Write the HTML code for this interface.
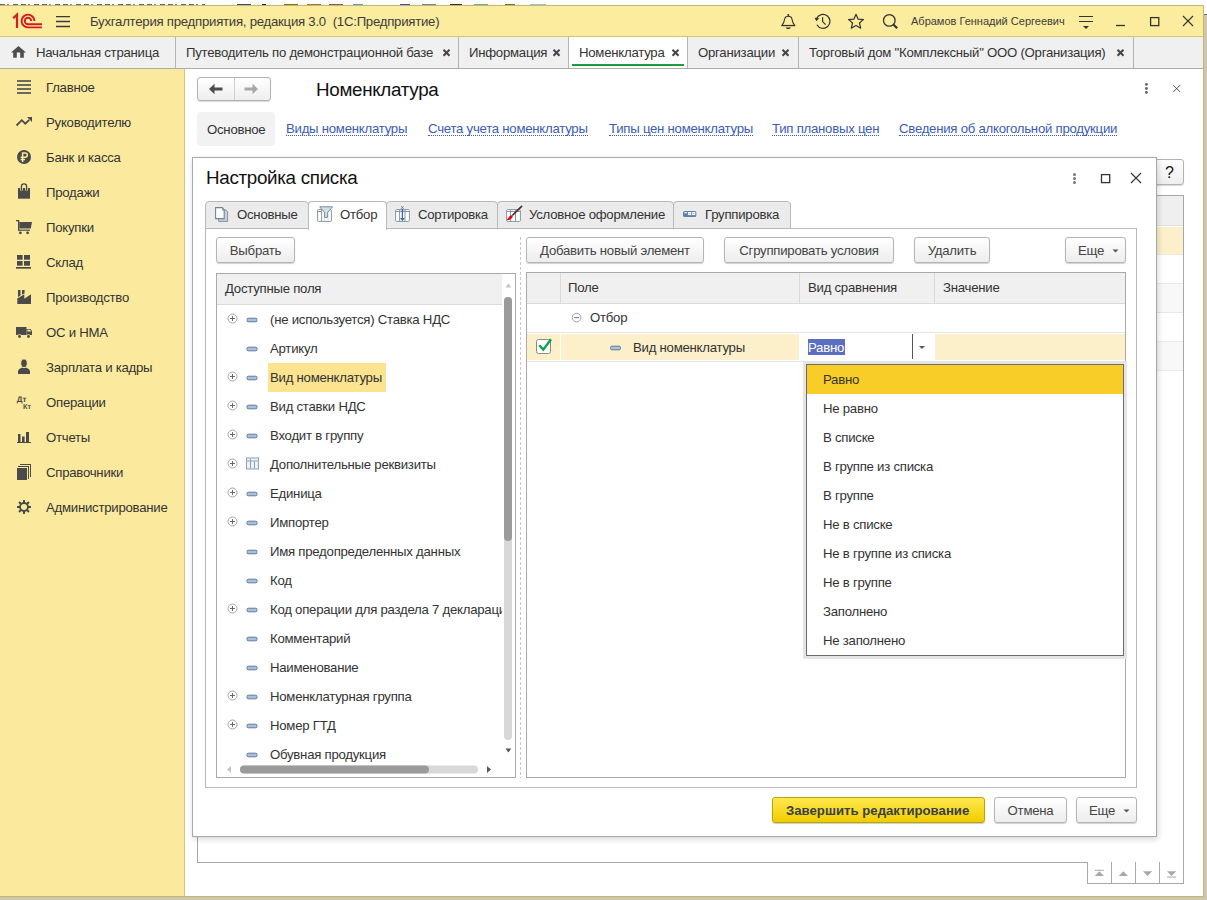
<!DOCTYPE html>
<html><head><meta charset="utf-8">
<style>
*{box-sizing:border-box;margin:0;padding:0}
html,body{width:1207px;height:900px;overflow:hidden}
body{position:relative;background:#CCC6B2;font-family:"Liberation Sans",sans-serif;font-size:13.2px;letter-spacing:-0.25px;color:#333}
.a{position:absolute}
.t{position:absolute;white-space:pre;line-height:17px;height:17px}
svg{position:absolute;overflow:visible}
.btn{position:absolute;border:1px solid #B4B4B4;border-radius:3px;background:linear-gradient(#FFFFFF,#EDEDED);box-shadow:0 1px 1px rgba(0,0,0,.18);color:#444;text-align:center;line-height:25px;white-space:pre}
.sep{position:absolute;top:37px;width:1px;height:31px;background:#B5B5B5}
.link{color:#3B5BB5;border-bottom:1px dotted #3B5BB5;height:16px!important}
</style></head>
<body>
<!-- top strip -->
<div class="a" style="left:0;top:0;width:1207px;height:5px;background:#fff"></div>
<div class="a" style="left:1204px;top:0;width:3px;height:14px;background:#fff"></div>
<div class="a" style="left:1204px;top:14px;width:3px;height:1px;background:#6A6E78"></div>
<div class="a" style="left:0;top:4px;width:205px;height:1px;background:repeating-linear-gradient(90deg,#6A6A6A 0 5px,transparent 5px 7px,#888 7px 9px,transparent 9px 13px,#666 13px 18px,transparent 18px 21px)"></div>
<div class="a" style="left:237px;top:4px;width:14px;height:1px;background:#2A4F8F"></div>
<div class="a" style="left:262px;top:4px;width:4px;height:1px;background:#222"></div>
<div class="a" style="left:284px;top:4px;width:14px;height:1px;background:#8A6A20"></div>
<div class="a" style="left:307px;top:4px;width:14px;height:1px;background:#A07A30"></div>
<div class="a" style="left:329px;top:4px;width:14px;height:1px;background:#9A5050"></div>
<div class="a" style="left:353px;top:4px;width:10px;height:1px;background:#5A9AD0"></div>
<div class="a" style="left:400px;top:4px;width:10px;height:1px;background:#3050B0"></div>
<div class="a" style="left:422px;top:4px;width:14px;height:1px;background:#7080A0"></div>
<div class="a" style="left:450px;top:4px;width:12px;height:1px;background:#442222"></div>
<div class="a" style="left:474px;top:4px;width:14px;height:1px;background:#70B070"></div>
<div class="a" style="left:505px;top:4px;width:10px;height:1px;background:#8A6A20"></div>
<div class="a" style="left:530px;top:4px;width:16px;height:1px;background:#9AC0E0"></div>
<!-- window frame -->
<div class="a" style="left:0;top:5px;width:1204px;height:892px;border:1px solid #C8B86C;border-left:none;background:#fff"></div>
<!-- title bar -->
<div class="a" style="left:0;top:6px;width:1203px;height:31px;background:#FBEC9E;border-bottom:1px solid #D5C37A"></div>
<!-- tab bar -->
<div class="a" style="left:0;top:37px;width:1203px;height:32px;background:#F0F0F0;border-bottom:1px solid #ABABAB"></div>
<!-- sidebar -->
<div class="a" style="left:0;top:69px;width:185px;height:827px;background:#FBEA9D;border-right:1px solid #D6C67E"></div>

<!-- ===== title bar content ===== -->
<svg style="left:0;top:0" width="1207" height="40">
  <!-- 1C logo -->
  <g fill="none" stroke="#D71920">
    <path d="M13.2 18.3 L17 14.6 V28" stroke-width="2.2"/>
    <path d="M42 27.4 H28 A6.4 6.4 0 1 1 34.4 21" stroke-width="1.9"/>
    <path d="M42 24.2 H28 A3.2 3.2 0 1 1 31.2 21" stroke-width="1.9"/>
  </g>
  <!-- hamburger -->
  <g stroke="#3A3A3A" stroke-width="1.3">
    <path d="M56 16.6H70M56 21.5H70M56 26.5H70"/>
  </g>
</svg>
<div class="t" style="left:90px;top:13px;color:#3C3C3C;letter-spacing:-0.25px">Бухгалтерия предприятия, редакция 3.0  (1С:Предприятие)</div>

<svg style="left:0;top:0" width="1207" height="40">
  <!-- bell -->
  <path d="M782 25.3 C784 23 784.4 21 784.8 18.5 C785.1 16.9 786.1 16.2 788.3 16.2 C790.5 16.2 791.5 16.9 791.8 18.5 C792.2 21 792.6 23 794.6 25.3" fill="none" stroke="#333" stroke-width="1.1"/>
  <rect x="781.3" y="24.9" width="14" height="1.3" fill="#333"/>
  <circle cx="788.3" cy="15.1" r="1" fill="#333"/>
  <path d="M785.6 27.4 H791 C790.4 28.6 789.4 29.1 788.3 29.1 C787.2 29.1 786.2 28.6 785.6 27.4Z" fill="#333"/>
  <!-- history clock -->
  <path d="M816.6 18.45 A7 7 0 1 1 816.9 24.8" fill="none" stroke="#333" stroke-width="1.2"/>
  <path d="M814.6 17.8 L819.2 18.3 L816.3 21.3Z" fill="#333"/>
  <path d="M822.6 17.2 V21.6 L825.6 24.6" fill="none" stroke="#333" stroke-width="1.2"/>
  <!-- star -->
  <path d="M856 14.3 L858.2 19.2 L863.4 19.6 L859.4 23 L860.7 28.2 L856 25.4 L851.3 28.2 L852.6 23 L848.6 19.6 L853.8 19.2Z" fill="none" stroke="#333" stroke-width="1.2" stroke-linejoin="round"/>
  <!-- search -->
  <circle cx="889.3" cy="20.4" r="5.8" fill="none" stroke="#333" stroke-width="1.3"/>
  <path d="M893.6 24.8 L897.2 28.3" stroke="#333" stroke-width="2.2"/>
  <!-- filter lines -->
  <g stroke="#333" stroke-width="1.2"><path d="M1079 16.5H1093M1079 21.5H1093"/></g>
  <path d="M1083 26 H1089 L1086 29Z" fill="#333"/>
  <!-- minimize -->
  <path d="M1116 25.5H1125" stroke="#333" stroke-width="1.3"/>
  <!-- maximize -->
  <rect x="1150.6" y="17.6" width="8.2" height="8" fill="none" stroke="#333" stroke-width="1.3"/>
  <!-- close -->
  <path d="M1183 16L1193 26M1193 16L1183 26" stroke="#333" stroke-width="1.1"/>
</svg>
<div class="t" style="left:911px;top:13px;font-size:11px;letter-spacing:0;color:#3C3C3C">Абрамов Геннадий Сергеевич</div>

<!-- ===== tab bar ===== -->
<svg style="left:0;top:0" width="40" height="70">
  <path d="M11 52.6 L18.5 46 L26 52.6 H23.8 V57.8 H20.2 V52.6 H16.8 V57.8 H13.2 V52.6Z" fill="#4D4D4D"/>
</svg>
<div class="t" style="left:36px;top:44px">Начальная страница</div>
<div class="sep" style="left:175px"></div>
<div class="t" style="left:186px;top:44px">Путеводитель по демонстрационной базе</div>
<div class="sep" style="left:458px"></div>
<div class="t" style="left:469px;top:44px">Информация</div>
<div class="sep" style="left:568px"></div>
<div class="a" style="left:569px;top:37px;width:118px;height:31px;background:#fff"></div>
<div class="a" style="left:572px;top:64px;width:112px;height:2px;background:#1F9C3F"></div>
<div class="t" style="left:579px;top:44px">Номенклатура</div>
<div class="sep" style="left:687px"></div>
<div class="t" style="left:698px;top:44px">Организации</div>
<div class="sep" style="left:798px"></div>
<div class="t" style="left:809px;top:44px">Торговый дом "Комплексный" ООО (Организация)</div>
<div class="sep" style="left:1133px"></div>
<svg style="left:0;top:0" width="1207" height="70">
  <g stroke="#444" stroke-width="2">
    <path d="M443.5 49.7l6 6M449.5 49.7l-6 6"/>
    <path d="M553.5 49.7l6 6M559.5 49.7l-6 6"/>
    <path d="M672.5 49.7l6 6M678.5 49.7l-6 6"/>
    <path d="M782.5 49.7l6 6M788.5 49.7l-6 6"/>
    <path d="M1117.5 49.7l6 6M1123.5 49.7l-6 6"/>
  </g>
</svg>

<!-- ===== sidebar ===== -->
<div class="t" style="left:46px;top:79.0px;">Главное</div>
<div class="t" style="left:46px;top:114.0px;">Руководителю</div>
<div class="t" style="left:46px;top:149.0px;">Банк и касса</div>
<div class="t" style="left:46px;top:184.0px;">Продажи</div>
<div class="t" style="left:46px;top:219.0px;">Покупки</div>
<div class="t" style="left:46px;top:254.0px;">Склад</div>
<div class="t" style="left:46px;top:289.0px;">Производство</div>
<div class="t" style="left:46px;top:324.0px;">ОС и НМА</div>
<div class="t" style="left:46px;top:359.0px;">Зарплата и кадры</div>
<div class="t" style="left:46px;top:394.0px;">Операции</div>
<div class="t" style="left:46px;top:429.0px;">Отчеты</div>
<div class="t" style="left:46px;top:464.0px;">Справочники</div>
<div class="t" style="left:46px;top:499.0px;">Администрирование</div>
<svg style="left:0;top:0" width="185" height="520">
 <g fill="#4A4A4A">
  <!-- main -->
  <rect x="17" y="80.2" width="14" height="1.6"/><rect x="17" y="84.2" width="14" height="1.6"/><rect x="17" y="88.2" width="14" height="1.6"/><rect x="17" y="92.2" width="14" height="1.6"/>
  <!-- trend -->
  <path d="M16.5 125.5 L21.8 120.2 L25.3 123.7 L29.2 119.8" fill="none" stroke="#4A4A4A" stroke-width="1.8"/>
  <path d="M27 117 H32 V122 Z"/>
  <!-- ruble -->
  <circle cx="24" cy="157" r="7"/>
  <path d="M22.6 162 V153 H25.2 A2.1 2.1 0 0 1 25.2 157.2 H20.6 M20.6 159.4 H25" fill="none" stroke="#FBEA9D" stroke-width="1.5"/>
  <!-- bag -->
  <rect x="18" y="188" width="12" height="10.7"/>
  <path d="M21.4 190.5 V186.5 A2.6 2.6 0 0 1 26.6 186.5 V190.5" fill="none" stroke="#FBEA9D" stroke-width="2.8"/>
  <path d="M21.4 190.5 V186.5 A2.6 2.6 0 0 1 26.6 186.5 V190.5" fill="none" stroke="#4A4A4A" stroke-width="1.3"/>
  <!-- cart -->
  <path d="M19.3 222 H32 L30.8 228.6 H19.3Z"/>
  <rect x="16" y="220" width="2.8" height="1.3"/>
  <rect x="18" y="220" width="1.3" height="10.8"/>
  <rect x="18" y="229.6" width="12" height="1.2"/>
  <circle cx="20.4" cy="232.8" r="1.4"/><circle cx="27.6" cy="232.8" r="1.4"/>
  <!-- warehouse -->
  <rect x="17" y="255" width="5.6" height="4.7"/><rect x="24" y="255" width="6" height="4.7"/>
  <rect x="17" y="261" width="5.6" height="4.7"/><rect x="24" y="261" width="6" height="4.7"/>
  <rect x="16" y="267" width="15" height="1.7"/>
  <!-- factory -->
  <path d="M17.3 298.6 L24.3 294.3 V298.8 L31 294.3 V304 H17.3Z"/>
  <path d="M18 290 H20.5 V295.6 L18 297.1Z"/><path d="M22 290 H24.6 V293.2 L22 294.7Z"/>
  <!-- truck -->
  <rect x="16" y="327" width="10.5" height="8"/>
  <path d="M26.5 329 H30.5 L32 331 V335 H26.5Z"/>
  <path d="M27.3 329.8 H30 L31.2 331.5 H27.3Z" fill="#FBEA9D"/>
  <circle cx="19.5" cy="336.5" r="2.3" fill="#FBEA9D"/><circle cx="28.5" cy="336.5" r="2.3" fill="#FBEA9D"/>
  <circle cx="19.5" cy="336.5" r="1.4"/><circle cx="28.5" cy="336.5" r="1.4"/>
  <!-- person -->
  <path d="M18 374 V371.8 C18 369.2 20.8 367.6 24 367.6 C27.2 367.6 30 369.2 30 371.8 V374Z"/>
  <ellipse cx="24" cy="363.2" rx="3.3" ry="4.3" stroke="#FBEA9D" stroke-width="1"/>
  <!-- Dt Kt -->
  <g style="letter-spacing:0">
  <text x="16.8" y="401.5" font-family="Liberation Sans" font-weight="bold" font-size="8" text-rendering="geometricPrecision">Дт</text>
  <text x="23" y="408.6" font-family="Liberation Sans" font-weight="bold" font-size="7.2" text-rendering="geometricPrecision">Кт</text>
  </g>
  <!-- reports -->
  <rect x="18" y="434" width="2.5" height="8.2"/><rect x="22" y="436.5" width="2.6" height="5.7"/><rect x="26" y="432" width="3" height="10.2"/>
  <rect x="17" y="442" width="14" height="1"/>
  <!-- directories -->
  <rect x="17" y="468" width="10" height="12"/>
  <rect x="18" y="466" width="11" height="1"/><rect x="28" y="466" width="1" height="13"/>
  <rect x="20" y="464" width="11" height="1"/><rect x="30" y="464" width="1" height="13"/>
  <!-- gear -->
  <g transform="translate(24 507)">
   <g stroke="#4A4A4A" stroke-width="2">
    <path d="M0 -7V7M-7 0H7M-4.95 -4.95L4.95 4.95M4.95 -4.95L-4.95 4.95"/>
   </g>
   <circle r="4.9"/>
   <circle r="3.1" fill="#FBEA9D"/>
  </g>
 </g>
</svg>

<!-- ===== behind form ===== -->
<div class="a" style="left:197px;top:77px;width:74px;height:24px;border:1px solid #B2B2B2;border-radius:3px;background:linear-gradient(#FFFFFF,#EEEEEE);box-shadow:0 1px 1px rgba(0,0,0,.15)"></div>
<div class="a" style="left:234px;top:78px;width:1px;height:22px;background:#CFCFCF"></div>
<svg style="left:0;top:0" width="300" height="110">
  <path d="M209 89 L214.5 83.8 V87.6 H222.5 V90.4 H214.5 V94.2Z" fill="#4D4D4D"/>
  <path d="M258 89 L252.5 83.8 V87.6 H244.5 V90.4 H252.5 V94.2Z" fill="#A8A8A8"/>
</svg>
<div class="t" style="left:316px;top:78px;height:24px;line-height:24px;font-size:18.8px;letter-spacing:-0.3px;color:#111">Номенклатура</div>
<svg style="left:0;top:0" width="1207" height="110">
  <circle cx="1146.4" cy="84.4" r="1.45" fill="#6A6A6A"/><circle cx="1146.4" cy="88.5" r="1.45" fill="#6A6A6A"/><circle cx="1146.4" cy="92.5" r="1.45" fill="#6A6A6A"/>
  <path d="M1173.2 85.1 L1180.2 92.1 M1180.2 85.1 L1173.2 92.1" stroke="#444" stroke-width="0.9"/>
</svg>
<div class="a" style="left:197px;top:112px;width:78px;height:34px;background:#F2F2F2;border-radius:4px"></div>
<div class="t" style="left:207px;top:121px">Основное</div>
<div class="t link" style="left:286px;top:120px">Виды номенклатуры</div>
<div class="t link" style="left:428px;top:120px">Счета учета номенклатуры</div>
<div class="t link" style="left:609px;top:120px">Типы цен номенклатуры</div>
<div class="t link" style="left:772px;top:120px">Тип плановых цен</div>
<div class="t link" style="left:899px;top:120px">Сведения об алкогольной продукции</div>

<!-- help button -->
<div class="a" style="left:1150px;top:159px;width:34px;height:26px;border:1px solid #B2B2B2;border-radius:3px;background:linear-gradient(#FFFFFF,#EEEEEE);box-shadow:0 1px 1px rgba(0,0,0,.15)"></div>
<div class="t" style="left:1165px;top:164px;font-size:16px;letter-spacing:0;color:#111">?</div>
<!-- behind table -->
<div class="a" style="left:197px;top:195px;width:987px;height:668px;border:1px solid #A8A8A8;background:#fff"></div>
<div class="a" style="left:198px;top:196px;width:985px;height:30px;background:#EFEFEF;border-bottom:1px solid #E0E0E0"></div>
<div class="a" style="left:198px;top:227px;width:985px;height:28px;background:#FCF0CA;border-bottom:1px solid #E8E8E8"></div>
<div class="a" style="left:198px;top:255px;width:985px;height:29px;background:#FFFFFF;border-bottom:1px solid #E8E8E8"></div>
<div class="a" style="left:198px;top:284px;width:985px;height:29px;background:#F8F8F8;border-bottom:1px solid #E8E8E8"></div>
<div class="a" style="left:198px;top:313px;width:985px;height:29px;background:#FFFFFF;border-bottom:1px solid #E8E8E8"></div>
<div class="a" style="left:198px;top:342px;width:985px;height:29px;background:#F8F8F8;border-bottom:1px solid #E8E8E8"></div>
<!-- behind nav buttons -->
<div class="a" style="left:1087px;top:862px;width:97px;height:22px;border:1px solid #A8A8A8;border-top:none;background:#fff"></div>
<div class="a" style="left:1111px;top:862px;width:1px;height:21px;background:#A8A8A8"></div>
<div class="a" style="left:1135px;top:862px;width:1px;height:21px;background:#A8A8A8"></div>
<div class="a" style="left:1159px;top:862px;width:1px;height:21px;background:#A8A8A8"></div>
<svg style="left:0;top:0" width="1207" height="900">
  <g fill="#A8A8A8">
    <rect x="1094.8" y="869.8" width="9.2" height="1"/><path d="M1094.8 876 L1099.4 871.3 L1104 876Z"/>
    <path d="M1118.8 876 L1123.4 871.3 L1128 876Z"/>
    <path d="M1143 871.3 L1147.6 876 L1152.2 871.3Z"/>
    <path d="M1167 871.3 L1171.6 876 L1176.2 871.3Z"/><rect x="1167" y="876.6" width="9.2" height="1"/>
  </g>
</svg>

<!-- ===== dialog ===== -->
<div class="a" style="left:192px;top:157px;width:965px;height:680px;border:1px solid #A8A8A8;background:#fff;box-shadow:1px 2px 6px rgba(0,0,0,.17)"></div>
<div class="t" style="left:206px;top:166px;height:24px;line-height:24px;font-size:18.8px;letter-spacing:-0.3px;color:#111">Настройка списка</div>
<svg style="left:0;top:0" width="1207" height="200">
  <circle cx="1074.5" cy="174.5" r="1.5" fill="#777"/><circle cx="1074.5" cy="178.5" r="1.5" fill="#777"/><circle cx="1074.5" cy="182.5" r="1.5" fill="#777"/>
  <rect x="1101.5" y="174.6" width="8.2" height="8" fill="none" stroke="#333" stroke-width="1.3"/>
  <path d="M1131 173 L1141 183 M1141 173 L1131 183" stroke="#333" stroke-width="1.1"/>
</svg>
<!-- tab page frame -->
<div class="a" style="left:205px;top:228px;width:932px;height:560px;border:1px solid #B9B9B9;background:#fff"></div>
<!-- tabs -->
<div class="a" style="left:205px;top:201px;width:104px;height:28px;border:1px solid #B9B9B9;border-radius:4px 4px 0 0;background:#EBEBEB"></div>
<div class="a" style="left:386px;top:201px;width:112px;height:28px;border:1px solid #B9B9B9;border-radius:4px 4px 0 0;background:#EBEBEB"></div>
<div class="a" style="left:497px;top:201px;width:177px;height:28px;border:1px solid #B9B9B9;border-radius:4px 4px 0 0;background:#EBEBEB"></div>
<div class="a" style="left:673px;top:201px;width:118px;height:28px;border:1px solid #B9B9B9;border-radius:4px 4px 0 0;background:#EBEBEB"></div>
<div class="a" style="left:308px;top:201px;width:79px;height:29px;border:1px solid #B9B9B9;border-bottom:none;border-radius:4px 4px 0 0;background:#fff"></div>
<div class="t" style="left:237px;top:206px">Основные</div>
<div class="t" style="left:340px;top:206px">Отбор</div>
<div class="t" style="left:418px;top:206px">Сортировка</div>
<div class="t" style="left:529px;top:206px">Условное оформление</div>
<div class="t" style="left:705px;top:206px">Группировка</div>
<svg style="left:0;top:0" width="1207" height="240">
  <!-- tab1 icon: pages -->
  <path d="M218.6 210 H226 L227.6 211.8 V221.4 H218.6Z" fill="#C9D1DA" stroke="#7F93A6" stroke-width="1"/>
  <path d="M215.6 207.6 H222.4 L224.2 209.6 V218.6 H215.6Z" fill="#fff" stroke="#6F849A" stroke-width="1.1"/>
  <path d="M222.2 207.8 V210.4 H224.2Z" fill="#6F849A"/>
  <!-- tab2 icon: funnel over table -->
  <rect x="317.6" y="209.6" width="13.8" height="11.8" rx="1" fill="#fff" stroke="#8797A5" stroke-width="1"/>
  <path d="M317.6 211.5 H321.6 M321.6 209.6 V221.4" stroke="#8797A5" stroke-width="1"/>
  <path d="M324.5 212 V221M328 212 V221" stroke="#D5DBE1" stroke-width="1"/>
  <path d="M319.6 206.8 H332.6 L327.6 212.4 V217.4 H324.6 V212.4Z" fill="#D5DCE3" stroke="#7D8D9B" stroke-width="1"/>
  <!-- tab3 icon: sort -->
  <rect x="395.6" y="209.6" width="13.8" height="11.8" rx="1" fill="#fff" stroke="#8797A5" stroke-width="1"/>
  <path d="M395.6 211.5 H409.4 M399.6 209.6 V221.4 M405 209.6 V221.4" stroke="#8797A5" stroke-width="1"/>
  <path d="M402.4 210 V218.5" stroke="#3A68A8" stroke-width="1.3"/>
  <path d="M400 218 H404.8 L402.4 221.2Z" fill="#3A68A8"/>
  <path d="M401.4 206.3 L403.4 208.3 M403.4 206.3 L401.4 208.3 M401.4 208.3 L403.4 210.3 M403.4 208.3 L401.4 210.3" stroke="#3A68A8" stroke-width=".8"/>
  <!-- tab4 icon: brush -->
  <rect x="506.6" y="209.6" width="13.8" height="11.8" rx="1" fill="#fff" stroke="#8797A5" stroke-width="1"/>
  <path d="M506.6 211.5 H520.4 M510.6 209.6 V221.4 M515.5 209.6 V221.4" stroke="#8797A5" stroke-width="1"/>
  <path d="M521.6 206.4 L512.8 215" stroke="#4A2A10" stroke-width="1.6" stroke-linecap="round"/>
  <path d="M511.8 215.2 C510 215.2 508.6 217.5 506.6 220.2 C509.5 220.4 511.5 219 512.6 217 C513 216.3 512.8 215.6 511.8 215.2Z" fill="#E80000"/>
  <!-- tab5 icon: grouping -->
  <rect x="683" y="211" width="13.3" height="6" rx="1.5" fill="#5E82A8"/>
  <rect x="684.3" y="212.2" width="2.8" height="1" fill="#fff"/>
  <rect x="688.1" y="212" width="3.1" height="3.1" fill="#fff"/><rect x="692.2" y="212" width="3.1" height="3.1" fill="#fff"/>
  <circle cx="689.6" cy="213.5" r=".5" fill="#888"/><circle cx="693.7" cy="213.5" r=".5" fill="#888"/>
</svg>

<!-- buttons -->
<div class="btn" style="left:216px;top:237px;width:79px;height:26px">Выбрать</div>
<div class="btn" style="left:526px;top:237px;width:178px;height:26px">Добавить новый элемент</div>
<div class="btn" style="left:724px;top:237px;width:170px;height:26px">Сгруппировать условия</div>
<div class="btn" style="left:914px;top:237px;width:76px;height:26px">Удалить</div>
<div class="btn" style="left:1065px;top:237px;width:61px;height:26px;text-align:left;padding-left:12px">Еще</div>
<svg style="left:0;top:0" width="1207" height="270"><path d="M1112.5 249.5 H1118.5 L1115.5 252.5Z" fill="#555"/></svg>
<!-- splitter -->
<div class="a" style="left:520px;top:237px;width:1px;height:541px;background:repeating-linear-gradient(#C8C8C8 0 3px,transparent 3px 5px)"></div>

<!-- ===== left table ===== -->
<div class="a" style="left:216px;top:273px;width:300px;height:505px;border:1px solid #A9A9A9;background:#fff;overflow:hidden">
  <div class="a" style="left:0;top:0;width:285px;height:31px;background:#F0F0F0;border-bottom:1px solid #DADADA"></div>
  <div class="t" style="left:8px;top:6px">Доступные поля</div>
  <div class="a" style="left:51px;top:89px;width:118px;height:29px;background:#FBE38F"></div>
  <div class="a" style="left:0;top:31px;width:285px;height:460px;overflow:hidden"><div class="a" style="left:0;top:-31px;width:300px;height:505px">
<div class="t" style="left:53px;top:37.0px">(не используется) Ставка НДС</div>
  <div class="t" style="left:53px;top:66.0px">Артикул</div>
  <div class="t" style="left:53px;top:95.0px">Вид номенклатуры</div>
  <div class="t" style="left:53px;top:124.0px">Вид ставки НДС</div>
  <div class="t" style="left:53px;top:153.0px">Входит в группу</div>
  <div class="t" style="left:53px;top:182.0px">Дополнительные реквизиты</div>
  <div class="t" style="left:53px;top:211.0px">Единица</div>
  <div class="t" style="left:53px;top:240.0px">Импортер</div>
  <div class="t" style="left:53px;top:269.0px">Имя предопределенных данных</div>
  <div class="t" style="left:53px;top:298.0px">Код</div>
  <div class="t" style="left:53px;top:327.0px">Код операции для раздела 7 декларации</div>
  <div class="t" style="left:53px;top:356.0px">Комментарий</div>
  <div class="t" style="left:53px;top:385.0px">Наименование</div>
  <div class="t" style="left:53px;top:414.0px">Номенклатурная группа</div>
  <div class="t" style="left:53px;top:443.0px">Номер ГТД</div>
  <div class="t" style="left:53px;top:472.0px">Обувная продукция</div>
</div></div>
<svg style="left:-1px;top:-1px" width="300" height="505">
  <circle cx="16.5" cy="45.5" r="4.5" fill="#fff" stroke="#A5A5A5" stroke-width="1"/><path d="M14 45.5H19M16.5 43.0V48.0" stroke="#6A6A6A" stroke-width="1"/>
  <rect x="31" y="45.2" width="10" height="3.6" rx="1.3" fill="#A9C0D6" stroke="#5B7C9E" stroke-width="1"/>
  <rect x="31" y="74.2" width="10" height="3.6" rx="1.3" fill="#A9C0D6" stroke="#5B7C9E" stroke-width="1"/>
  <circle cx="16.5" cy="103.5" r="4.5" fill="#fff" stroke="#A5A5A5" stroke-width="1"/><path d="M14 103.5H19M16.5 101.0V106.0" stroke="#6A6A6A" stroke-width="1"/>
  <rect x="31" y="103.2" width="10" height="3.6" rx="1.3" fill="#A9C0D6" stroke="#5B7C9E" stroke-width="1"/>
  <circle cx="16.5" cy="132.5" r="4.5" fill="#fff" stroke="#A5A5A5" stroke-width="1"/><path d="M14 132.5H19M16.5 130.0V135.0" stroke="#6A6A6A" stroke-width="1"/>
  <rect x="31" y="132.2" width="10" height="3.6" rx="1.3" fill="#A9C0D6" stroke="#5B7C9E" stroke-width="1"/>
  <circle cx="16.5" cy="161.5" r="4.5" fill="#fff" stroke="#A5A5A5" stroke-width="1"/><path d="M14 161.5H19M16.5 159.0V164.0" stroke="#6A6A6A" stroke-width="1"/>
  <rect x="31" y="161.2" width="10" height="3.6" rx="1.3" fill="#A9C0D6" stroke="#5B7C9E" stroke-width="1"/>
  <circle cx="16.5" cy="190.5" r="4.5" fill="#fff" stroke="#A5A5A5" stroke-width="1"/><path d="M14 190.5H19M16.5 188.0V193.0" stroke="#6A6A6A" stroke-width="1"/>
  <rect x="30.5" y="185.0" width="12" height="11" fill="#EEF2F6" stroke="#8DA2B8" stroke-width="1"/><path d="M30.5 188.0H42.5M34.5 185.5V195.5M38.5 188.5V195.5" stroke="#8DA2B8" stroke-width="1"/>
  <circle cx="16.5" cy="219.5" r="4.5" fill="#fff" stroke="#A5A5A5" stroke-width="1"/><path d="M14 219.5H19M16.5 217.0V222.0" stroke="#6A6A6A" stroke-width="1"/>
  <rect x="31" y="219.2" width="10" height="3.6" rx="1.3" fill="#A9C0D6" stroke="#5B7C9E" stroke-width="1"/>
  <circle cx="16.5" cy="248.5" r="4.5" fill="#fff" stroke="#A5A5A5" stroke-width="1"/><path d="M14 248.5H19M16.5 246.0V251.0" stroke="#6A6A6A" stroke-width="1"/>
  <rect x="31" y="248.2" width="10" height="3.6" rx="1.3" fill="#A9C0D6" stroke="#5B7C9E" stroke-width="1"/>
  <rect x="31" y="277.2" width="10" height="3.6" rx="1.3" fill="#A9C0D6" stroke="#5B7C9E" stroke-width="1"/>
  <rect x="31" y="306.2" width="10" height="3.6" rx="1.3" fill="#A9C0D6" stroke="#5B7C9E" stroke-width="1"/>
  <circle cx="16.5" cy="335.5" r="4.5" fill="#fff" stroke="#A5A5A5" stroke-width="1"/><path d="M14 335.5H19M16.5 333.0V338.0" stroke="#6A6A6A" stroke-width="1"/>
  <rect x="31" y="335.2" width="10" height="3.6" rx="1.3" fill="#A9C0D6" stroke="#5B7C9E" stroke-width="1"/>
  <rect x="31" y="364.2" width="10" height="3.6" rx="1.3" fill="#A9C0D6" stroke="#5B7C9E" stroke-width="1"/>
  <rect x="31" y="393.2" width="10" height="3.6" rx="1.3" fill="#A9C0D6" stroke="#5B7C9E" stroke-width="1"/>
  <circle cx="16.5" cy="422.5" r="4.5" fill="#fff" stroke="#A5A5A5" stroke-width="1"/><path d="M14 422.5H19M16.5 420.0V425.0" stroke="#6A6A6A" stroke-width="1"/>
  <rect x="31" y="422.2" width="10" height="3.6" rx="1.3" fill="#A9C0D6" stroke="#5B7C9E" stroke-width="1"/>
  <circle cx="16.5" cy="451.5" r="4.5" fill="#fff" stroke="#A5A5A5" stroke-width="1"/><path d="M14 451.5H19M16.5 449.0V454.0" stroke="#6A6A6A" stroke-width="1"/>
  <rect x="31" y="451.2" width="10" height="3.6" rx="1.3" fill="#A9C0D6" stroke="#5B7C9E" stroke-width="1"/>
  <rect x="31" y="480.2" width="10" height="3.6" rx="1.3" fill="#A9C0D6" stroke="#5B7C9E" stroke-width="1"/>
  <!-- v scrollbar -->
  <path d="M289.5 14.5 L292.4 10.5 L295.3 14.5Z" fill="#C4C4C4"/>
  <rect x="288" y="24" width="8" height="443" rx="4" fill="#D8D8D8"/>
  <rect x="288" y="24" width="8" height="244" rx="4" fill="#9B9B9B"/>
  <path d="M289.5 475.5 L292.4 479.5 L295.3 475.5Z" fill="#555"/>
  <!-- h scrollbar -->
  <path d="M11 496.5 L15 493 V500Z" fill="#C4C4C4"/>
  <rect x="24" y="492.5" width="238" height="8" rx="4" fill="#D8D8D8"/>
  <rect x="24" y="492.5" width="189" height="8" rx="4" fill="#9B9B9B"/>
  <path d="M271 493 L275 496.5 L271 500Z" fill="#555"/>
</svg>
</div>

<!-- ===== right table ===== -->
<div class="a" style="left:526px;top:272px;width:600px;height:506px;border:1px solid #A9A9A9;background:#fff"></div>
<div class="a" style="left:527px;top:273px;width:598px;height:31px;background:#F0F0F0;border-bottom:1px solid #DADADA"></div>
<div class="a" style="left:560px;top:273px;width:1px;height:30px;background:#DADADA"></div>
<div class="a" style="left:799px;top:273px;width:1px;height:30px;background:#DADADA"></div>
<div class="a" style="left:934px;top:273px;width:1px;height:30px;background:#DADADA"></div>
<div class="t" style="left:568px;top:279px">Поле</div>
<div class="t" style="left:808px;top:279px">Вид сравнения</div>
<div class="t" style="left:943px;top:279px">Значение</div>
<div class="a" style="left:527px;top:332px;width:598px;height:1px;background:#E6E6E6"></div>
<div class="a" style="left:527px;top:334px;width:598px;height:26px;background:#FCF0CA"></div>
<div class="a" style="left:527px;top:361px;width:598px;height:1px;background:#E6E6E6"></div>
<div class="a" style="left:560px;top:333px;width:1px;height:28px;background:#FFFFFF"></div>
<div class="a" style="left:799px;top:333px;width:136px;height:27px;background:#FFFFFF"></div>
<div class="a" style="left:912px;top:334px;width:1px;height:25px;background:#555"></div>
<div class="a" style="left:808px;top:339px;width:37px;height:16px;background:#5B6EC2"></div>
<div class="t" style="left:808px;top:339px;color:#fff">Равно</div>
<div class="t" style="left:590px;top:309px">Отбор</div>
<div class="t" style="left:633px;top:339px">Вид номенклатуры</div>
<svg style="left:0;top:0" width="1207" height="400">
  <circle cx="576.6" cy="317.6" r="4.3" fill="#fff" stroke="#A0A0A0" stroke-width="1"/><path d="M574.2 317.6H579" stroke="#707070" stroke-width="1"/>
  <rect x="610.5" y="346.2" width="10" height="3.6" rx="1.3" fill="#A9C0D6" stroke="#5B7C9E" stroke-width="1"/>
  <rect x="536.5" y="339.5" width="14" height="14" rx="2" fill="#fff" stroke="#8A8A8A" stroke-width="1"/>
  <path d="M539.3 345.3 L543.3 349.6 L551 339.2" fill="none" stroke="#13A04A" stroke-width="2.4"/>
  <path d="M919 346 H925 L922 349Z" fill="#555"/>
</svg>

<!-- ===== dropdown ===== -->
<div class="a" style="left:803px;top:361px;width:324px;height:298px;border:3px solid #E5E5E5;background:#fff"></div>
<div class="a" style="left:806px;top:364px;width:318px;height:292px;border:1px solid #6B6B6B;background:#fff"></div>
<div class="a" style="left:807px;top:365px;width:316px;height:29px;background:#F9CD28"></div>
<div class="t" style="left:823px;top:371.0px">Равно</div>
<div class="t" style="left:823px;top:400.0px">Не равно</div>
<div class="t" style="left:823px;top:429.0px">В списке</div>
<div class="t" style="left:823px;top:458.0px">В группе из списка</div>
<div class="t" style="left:823px;top:487.0px">В группе</div>
<div class="t" style="left:823px;top:516.0px">Не в списке</div>
<div class="t" style="left:823px;top:545.0px">Не в группе из списка</div>
<div class="t" style="left:823px;top:574.0px">Не в группе</div>
<div class="t" style="left:823px;top:603.0px">Заполнено</div>
<div class="t" style="left:823px;top:632.0px">Не заполнено</div>

<!-- ===== bottom buttons ===== -->
<div class="a" style="left:772px;top:797px;width:213px;height:26px;border:1px solid #BBA300;border-radius:3px;background:linear-gradient(#FFE84E,#F0CD00);box-shadow:0 1px 1px rgba(0,0,0,.2)"></div>
<div class="t" style="left:786px;top:802px;font-weight:bold;letter-spacing:0;font-size:13.2px;color:#3A3F48">Завершить редактирование</div>
<div class="btn" style="left:994px;top:797px;width:73px;height:26px">Отмена</div>
<div class="btn" style="left:1076px;top:797px;width:61px;height:26px;text-align:left;padding-left:12px">Еще</div>
<svg style="left:0;top:0" width="1207" height="900"><path d="M1123.5 809.5 H1129.5 L1126.5 812.5Z" fill="#555"/></svg>

</body></html>
